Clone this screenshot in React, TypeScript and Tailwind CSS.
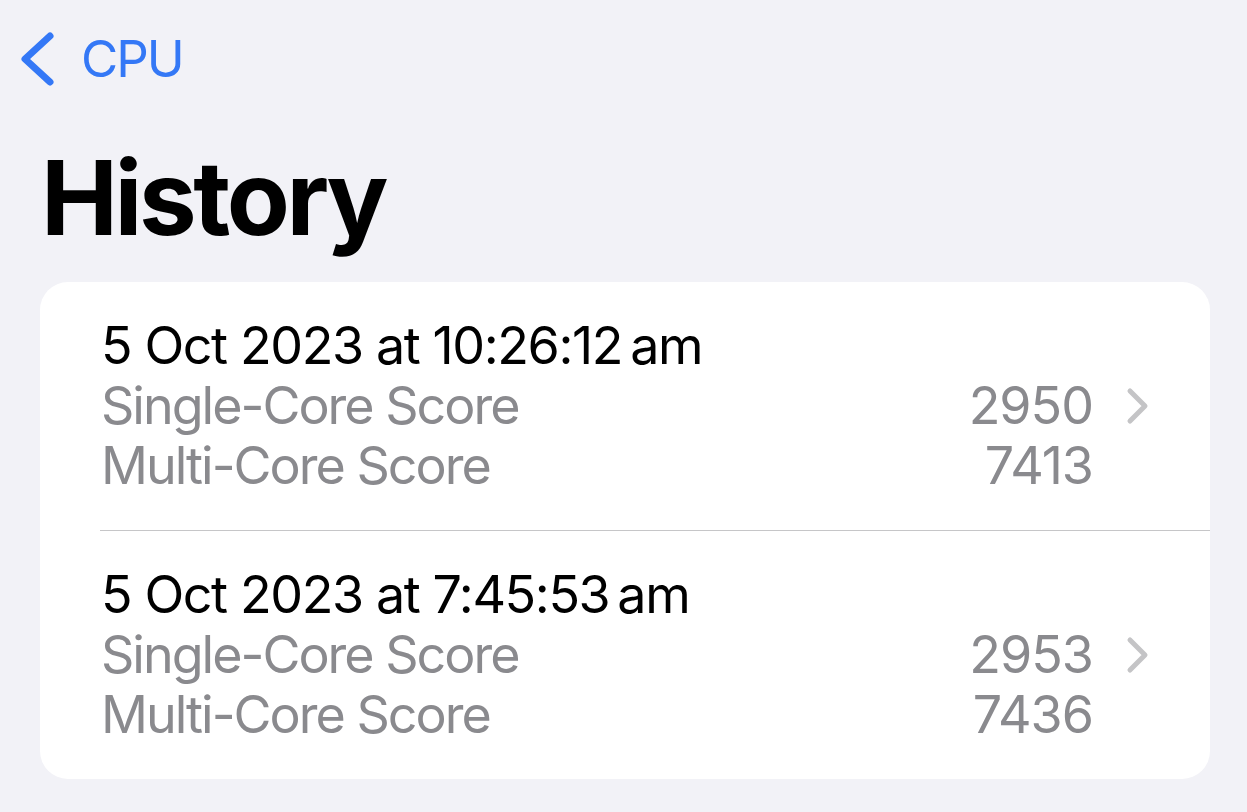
const rows = [
  { date: "5 Oct 2023 at 10:26:12\u2009am", single: "2950", multi: "7413" },
  { date: "5 Oct 2023 at 7:45:53\u2009am", single: "2953", multi: "7436" },
];

function Chevron({ className }: { className?: string }) {
  return (
    <svg viewBox="0 0 24 38" className={className} fill="none" stroke="currentColor" strokeWidth={5} strokeLinecap="round" strokeLinejoin="round">
      <path d="M4 4l15 15L4 34" />
    </svg>
  );
}

export default function App() {
  return (
    <div
      className="min-h-[812px] w-full bg-[#f2f2f7] px-10 pt-[29px]"
      style={{ fontFamily: "Inter, 'Noto Sans', sans-serif" }}
    >
      {/* nav */}
      <div className="flex h-[60px] items-center -ml-5 text-[#3478f6]">
        <svg viewBox="0 0 36 60" className="h-[60px] w-[36px]" fill="none" stroke="currentColor" strokeWidth={7} strokeLinecap="round" strokeLinejoin="round">
          <path d="M30 7L5 30l25 23" />
        </svg>
        <span className="ml-[25px] text-[51px] leading-[60px] tracking-[-2px]">CPU</span>
      </div>

      <h1 className="mt-[57px] ml-[1px] text-[103px] font-bold leading-[103px] tracking-[-3.4px] text-black">History</h1>

      <div className="mt-[33px] w-[1170px] rounded-[28px] bg-white">
        {rows.map((r, i) => (
          <div key={i}>
            {i > 0 && <div className="ml-[60px] h-px bg-[#c6c6c8]" />}
            <div className="flex items-center py-[34px] pl-[61px] pr-[60px] text-[52px] leading-[60px]">
              <div className="flex-1">
                <div className="text-black tracking-[-1.4px]">{r.date}</div>
                <div className="flex justify-between text-[#8a8a8e] tracking-[-2px]">
                  <span>Single-Core Score</span>
                  <span className="tracking-[-1px]">{r.single}</span>
                </div>
                <div className="flex justify-between text-[#8a8a8e] tracking-[-2px]">
                  <span>Multi-Core Score</span>
                  <span className="tracking-[-1px]">{r.multi}</span>
                </div>
              </div>
              <Chevron className="ml-[33px] mb-[1px] h-[38px] w-[24px] text-[#c4c4c6]" />
            </div>
          </div>
        ))}
      </div>
    </div>
  );
}
